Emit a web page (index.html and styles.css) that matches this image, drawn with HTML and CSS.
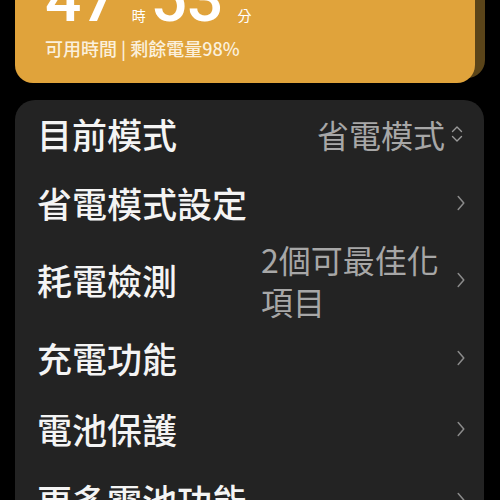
FILE: index.html
```html
<!DOCTYPE html>
<html lang="zh-Hant">
    <head>
        <title>電池</title>
        <meta name="viewport" content="width=device-width, initial-scale=1" charset="UTF-8">
    <link rel="stylesheet" href="styles.css">
    </head>
<body>
    <div class="summary">
        <div class="time">
            <span class="num">47</span><span class="unit">時</span>
            <span class="num">53</span><span class="unit">分</span>
        </div>
        <div class="sub">可用時間 | 剩餘電量98%</div>
    </div>

    <div class="list">
        <div class="row">
            <div class="label">目前模式</div>
            <div class="value">省電模式</div>
            <svg class="updown" width="12" height="18" viewBox="0 0 12 18"><path d="M1.5 6.5 L6 2 L10.5 6.5 M1.5 11.5 L6 16 L10.5 11.5" fill="none" stroke="#9a9a9a" stroke-width="1.4" stroke-linecap="round" stroke-linejoin="round"/></svg>
        </div>
        <div class="row">
            <div class="label">省電模式設定</div>
            <svg class="chev" width="8" height="16" viewBox="0 0 8 16"><path d="M1.2 1.5 L6.8 8 L1.2 14.5" fill="none" stroke="#8b8b8b" stroke-width="1.5" stroke-linecap="round" stroke-linejoin="round"/></svg>
        </div>
        <div class="row">
            <div class="label">耗電檢測</div>
            <div class="value wrap">2個可最佳化項目</div>
            <svg class="chev" width="8" height="16" viewBox="0 0 8 16"><path d="M1.2 1.5 L6.8 8 L1.2 14.5" fill="none" stroke="#8b8b8b" stroke-width="1.5" stroke-linecap="round" stroke-linejoin="round"/></svg>
        </div>
        <div class="row">
            <div class="label">充電功能</div>
            <svg class="chev" width="8" height="16" viewBox="0 0 8 16"><path d="M1.2 1.5 L6.8 8 L1.2 14.5" fill="none" stroke="#8b8b8b" stroke-width="1.5" stroke-linecap="round" stroke-linejoin="round"/></svg>
        </div>
        <div class="row">
            <div class="label">電池保護</div>
            <svg class="chev" width="8" height="16" viewBox="0 0 8 16"><path d="M1.2 1.5 L6.8 8 L1.2 14.5" fill="none" stroke="#8b8b8b" stroke-width="1.5" stroke-linecap="round" stroke-linejoin="round"/></svg>
        </div>
        <div class="row">
            <div class="label">更多電池功能</div>
            <svg class="chev" width="8" height="16" viewBox="0 0 8 16"><path d="M1.2 1.5 L6.8 8 L1.2 14.5" fill="none" stroke="#8b8b8b" stroke-width="1.5" stroke-linecap="round" stroke-linejoin="round"/></svg>
        </div>
    </div>
</body>
</html>
```

FILE: styles.css
```css
body {
    margin: 0;
    padding: 0;
    background-color: #000;
    font-family: "Noto Sans CJK TC", "Noto Sans", sans-serif;
    overflow: hidden;
}

.summary {
    margin: -32px 25px 0 15px;
    padding: 0 30px 23px;
    background-color: #e0a33b;
    border-radius: 18px;
    box-shadow: 10px -5px 0 #5a4419;
    color: #fff;
}

.time {
    display: flex;
    align-items: baseline;
    line-height: 1;
}

.num {
    font-family: Roboto, "Noto Sans", sans-serif;
    font-size: 64px;
    font-weight: 500;
}

.unit {
    font-size: 14px;
    margin: 0 5px 0 14px;
}

.sub {
    margin-top: 4px;
    font-size: 18px;
    font-weight: 500;
    line-height: 24px;
    color: #fbf0dc;
}

.list {
    margin: 17px 16px 0 15px;
    background-color: #232323;
    border-radius: 20px;
}

.row {
    display: flex;
    align-items: center;
    min-height: 71px;
    padding: 0 19px 0 22px;
}

.row:first-child {
    min-height: 67px;
}

.label {
    font-size: 35px;
    font-weight: 500;
    line-height: 1.2;
    color: #f4f4f4;
    white-space: nowrap;
}

.value {
    margin-left: auto;
    font-size: 32px;
    line-height: 42px;
    color: #a7a7a7;
}

.value.wrap {
    max-width: 178px;
}

.chev {
    margin-left: auto;
    flex-shrink: 0;
}

.value + .chev {
    margin-left: 18px;
}

.updown {
    margin-left: 6px;
    margin-right: 2px;
    flex-shrink: 0;
}
```
